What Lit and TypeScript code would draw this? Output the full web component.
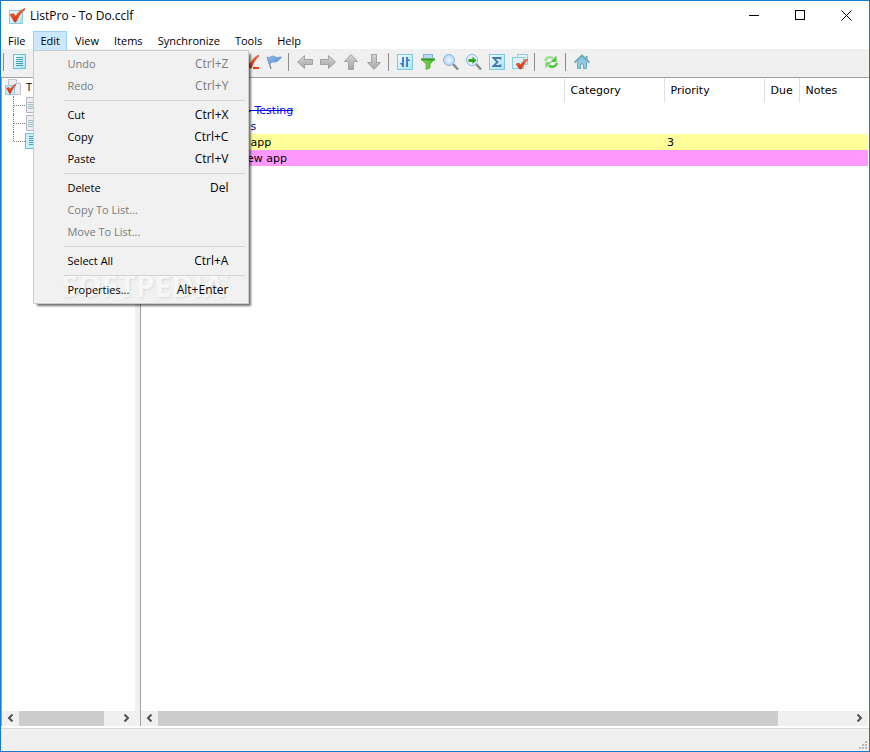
import { LitElement, html, css, svg, nothing } from "lit";
import { customElement, property } from "lit/decorators.js";

const page = (fill: string, line: string, ink: string) => svg`
  <path d="M1.500 .5h8l4 4v11h-12z" fill=${fill} stroke=${line}/>
  <path d="M9.500 .5v4h4" fill="#fff" stroke=${line}/>
  <path d="M3 5.500h6M3 7.500h9M3 9.500h9M3 11.500h9" stroke=${ink} fill="none"/>`;

const arrow = (d: string) => svg`<path d=${d} fill="url(#grey)" stroke="#a2a2a2"/>`;

const tile = svg`<rect x=".5" y=".5" width="15" height="15" fill="url(#ice)" stroke="#7cc8de"/>`;

const tick = (d: string) => svg`<path d=${d} fill="url(#red)" stroke="#c8320e" stroke-width=".5"/>`;

const icons: Record<string, unknown> = {
  app: svg`<rect x=".5" y="2.500" width="13" height="13" fill="url(#ice)" stroke="#8fcbe0"/>
    ${tick("M1 6.500L4.500 5.500L6.500 8.500C9 4.500 11.500 2 15.500 .5L16 1.500C12 4.500 9.500 8.500 7 14L5.500 14z")}`,
  root: svg`<path d="M3.500 .5h8l4 4v11h-12z" fill="#eeeef2" stroke="#c2c2cc"/><path d="M11.500 .5v4h4" fill="#fff" stroke="#c2c2cc"/>
    <rect x=".5" y="6.500" width="9" height="9" fill="#c9effa" stroke="#8fcbe0"/>
    ${tick("M1.500 9L4 8.500L5 10.500C6.500 8 8 6.500 10.500 5L11 6C8.500 8.500 7 11 5.500 14.500L4.500 14.500z")}`,
  doc: page("#eeeef0", "#b4b4be", "#9cbfc8"),
  docOn: svg`<rect x=".5" y=".5" width="14" height="15" fill="#c9f1fb" stroke="#6dbfd6"/>
    <path d="M4 3.500h8M4 5.500h8M4 7.500h8M4 9.500h8M4 11.500h8" stroke="#4a9db3"/>`,
  list: svg`<rect x="1.500" y=".5" width="12" height="14" fill="url(#ice)" stroke="#6dbfd6"/>
    <path d="M4 3.500h7M4 5.500h7M4 7.500h7M4 9.500h7M4 11.500h7" stroke="#4a9db3"/>`,
  check: svg`${tick("M1 8L5 7L7 10C9 6 11.500 3 15.500 1L16 2C12 6 10 9.500 8.500 14L6 14z")}
    <path d="M10 14h6" stroke="#ee3a17" stroke-width="2"/>`,
  flag: svg`<path d="M1.500 3L5 15" stroke="#8792a4" stroke-width="1.500"/>
    <path d="M1 3C3.500 5 5.500 .5 8.500 2.500S12.500 3 15.500 3C14.500 5 13 6 11 7.500C8.500 9 6 6.500 3.500 10.500z" fill="url(#blue)" stroke="#6f9ad2" stroke-width=".8"/>`,
  left: arrow("M.5 8L7.500 1.500V5.500H15.500V10.500H7.500V14.500z"),
  right: arrow("M15.500 8L8.500 1.500V5.500H.5V10.500H8.500V14.500z"),
  up: arrow("M8 .5L14.500 7.500H10.500V15.500H5.500V7.500H1.500z"),
  down: arrow("M8 15.500L14.500 8.500H10.500V.5H5.500V8.500H1.500z"),
  sort: svg`${tile}<path d="M6 3v10M10 13V3" stroke="#4a7ec8" stroke-width="2" fill="none"/>
    <path d="M2.500 9h4.500V13.500zM13.500 7H9V2.500z" fill="#4a7ec8"/>`,
  filter: svg`<path d="M1 5L6 10V15.500L10 14V10L15 5z" fill="url(#green)" stroke="#4fae35" stroke-width=".8"/>
    <rect x="3.500" y=".5" width="9" height="4" fill="#b9d9f4" stroke="#82b2e0"/><path d="M1 5.500h14" stroke="#3ba322" stroke-width="2"/>`,
  find: svg`<path d="M10 10L15 15.500" stroke="#858a92" stroke-width="2.500"/><circle cx="6" cy="6" r="5.500" fill="url(#lens)" stroke="#8fb2dc"/>`,
  findNext: svg`<path d="M10 10L15 15.500" stroke="#858a92" stroke-width="2.500"/><circle cx="6" cy="6" r="5.500" fill="#e4f1fd" stroke="#8fb2dc"/>
    <path d="M2.500 5h4V2.500L10.500 6.500L6.500 10V8H2.500z" fill="#2ea31b"/>`,
  sum: svg`${tile}<path d="M11.500 5.500V4H4.500L8.500 8L4.500 12H11.500V10.500" stroke="#4677be" stroke-width="1.800" fill="none"/>`,
  checks: svg`<path d="M5.500 .5h10v10h-10z" fill="#e2f7fd" stroke="#8fcde0"/><path d="M8 3.500h6M8 5.500h6" stroke="#a2cdd9"/>
    <rect x=".5" y="3.500" width="11" height="11" fill="#d5f4fc" stroke="#8fcde0"/>
    ${tick("M4 10L7 9L8.500 11C10.500 7.500 12 6.500 15 5L15.500 6C13 8.500 11 11.500 9.500 15L7.500 15z")}`,
  sync: svg`<path d="M2 7C3 3.500 7 2 10 4.500" fill="none" stroke="#a0de95" stroke-width="2.500"/>
    <path d="M13.500 1.500V8H7.500z" fill="#56c342"/>
    <path d="M14 9C13 12.500 9 14 6 11.500" fill="none" stroke="#4fc43a" stroke-width="2.500"/>
    <path d="M2.500 14.500V8H8.500z" fill="#7fd370"/>`,
  home: svg`<path d="M12.500 2v4" stroke="#6aaec5" stroke-width="2"/><path d="M3.500 8v6.500h3V10h3v4.500h3V8L8 3.500z" fill="#94cbdc" stroke="#66abc2"/>
    <path d="M.5 8.500L8 1.500L15.500 8.500" fill="none" stroke="#62a9c1" stroke-width="1.800"/>`,
};

const shades = svg`<defs>
  <linearGradient id="ice" x2="1" y2="1"><stop stop-color="#f4fdff"/><stop offset="1" stop-color="#a6e3f4"/></linearGradient>
  <linearGradient id="grey" x2="0" y2="1"><stop stop-color="#d4d4d4"/><stop offset="1" stop-color="#a6a6a6"/></linearGradient>
  <linearGradient id="red" x2="0" y2="1"><stop stop-color="#f9704a"/><stop offset="1" stop-color="#dd2c08"/></linearGradient>
  <linearGradient id="blue" x2="1" y2="1"><stop stop-color="#9cc0ee"/><stop offset="1" stop-color="#4f86cf"/></linearGradient>
  <linearGradient id="green" x2="1" y2="0"><stop stop-color="#8fe55c"/><stop offset="1" stop-color="#3fae26"/></linearGradient>
  <radialGradient id="lens"><stop stop-color="#eef7ff"/><stop offset="1" stop-color="#b2d5f6"/></radialGradient>
</defs>`;

@customElement("app-icon")
export class AppIcon extends LitElement {
  @property() name = "";
  static styles = css`
    :host { display: block; width: 16px; height: 16px; flex: none; }
    svg { display: block; }
  `;
  render() {
    return html`<svg width="16" height="16" viewBox="0 0 16 16" aria-hidden="true">${shades}${icons[this.name]}</svg>`;
  }
}

@customElement("scroll-bar")
export class ScrollBar extends LitElement {
  @property({ type: Number }) share = 50;
  static styles = css`
    :host { display: flex; height: 15px; background: #f0f0f0; }
    button { box-sizing: border-box; width: 17px; height: 15px; border: 0; background: none; display: flex; align-items: flex-start; padding: 3px 5px; }
    .track { flex: 1; }
    .thumb { height: 15px; background: #cdcdcd; }
    svg { display: block; flex: none; }
  `;
  render() {
    return html`
      <button aria-label="Scroll left"><svg width="7" height="8" viewBox="0 0 7 8"><path d="M5.500 .5L2 4L5.500 7.500" fill="none" stroke="#505050" stroke-width="2"/></svg></button>
      <div class="track"><div class="thumb" style="width:${this.share}%"></div></div>
      <button aria-label="Scroll right"><svg width="7" height="8" viewBox="0 0 7 8"><path d="M1.500 .5L5 4L1.500 7.500" fill="none" stroke="#505050" stroke-width="2"/></svg></button>`;
  }
}

type Entry = { label: string; keys?: string; off?: boolean };

const editMenu: Entry[][] = [
  [{ label: "Undo", keys: "Ctrl+Z", off: true }, { label: "Redo", keys: "Ctrl+Y", off: true }],
  [{ label: "Cut", keys: "Ctrl+X" }, { label: "Copy", keys: "Ctrl+C" }, { label: "Paste", keys: "Ctrl+V" }],
  [{ label: "Delete", keys: "Del" }, { label: "Copy To List...", off: true }, { label: "Move To List...", off: true }],
  [{ label: "Select All", keys: "Ctrl+A" }],
  [{ label: "Properties...", keys: "Alt+Enter" }],
];

const menus = ["File", "Edit", "View", "Items", "Synchronize", "Tools", "Help"];

const toolGroups: [string, string][][] = [
  [["check", "Check"], ["flag", "Flag"]],
  [["left", "Move left"], ["right", "Move right"], ["up", "Move up"], ["down", "Move down"]],
  [["sort", "Sort"], ["filter", "Filter"], ["find", "Find"], ["findNext", "Find next"], ["sum", "Totals"], ["checks", "Check all"]],
  [["sync", "Synchronize"]],
  [["home", "Home"]],
];

const rows = [
  { title: "- Testing", priority: "", tone: "done" },
  { title: "\u00a0s", priority: "", tone: "navy" },
  { title: "\u00a0app", priority: "3", tone: "yellow" },
  { title: "ew app", priority: "", tone: "pink" },
];

@customElement("app-root")
export class AppRoot extends LitElement {
  static styles = css`
    :host { display: block; font: 11px/16px "Open Sans", "Noto Sans", sans-serif; color: #000; }
    * { box-sizing: border-box; }
    button { font: inherit; color: inherit; border: 0; background: none; padding: 0; margin: 0; }
    svg { display: block; }
    .window { display: flex; flex-direction: column; min-height: 100vh; border: 1px solid #1979ca; background: #fff; }
    .title { display: flex; align-items: center; height: 30px; padding-left: 8px; }
    .title h1 { flex: 1; margin: 0 0 0 5px; font-size: 12px; font-weight: 400; }
    .title button { width: 46px; height: 30px; padding-bottom: 2px; display: grid; place-items: center; }
    .menubar { display: flex; gap: 1px; height: 18px; }
    .holder { position: relative; }
    .top { display: block; height: 20px; padding: 0 6px; border: 1px solid transparent; line-height: 18px; }
    .top.open { background: #cce8ff; border-color: #99d1ff; }
    .menu { position: absolute; top: 19px; left: 0; z-index: 2; width: 216px; padding: 2px; background: #f1f1f1; border: 1px solid #cccccc; box-shadow: 3px 3px 2px -1px rgba(0, 0, 0, .55); isolation: isolate; }
    .sep { height: 1px; margin: 3px 1px 3px 28px; background: #d5d5d5; }
    .item { display: flex; justify-content: space-between; width: 100%; height: 22px; padding: 0 18px 0 31px; line-height: 22px; text-align: left; }
    .item:disabled { color: #7b7b7b; }
    .keys { font-size: 12px; }
    .mark { position: absolute; z-index: -1; left: 27px; bottom: 1px; display: flex; font: 700 30px/32px "Open Sans", sans-serif; color: #f7f7f7; text-shadow: 1px 1px 2px #dadada; white-space: nowrap; }
    .mark sup { font-size: 12px; line-height: 16px; }
    .tools { display: flex; align-items: center; height: 28px; padding-bottom: 2px; background: #f0f0f0; }
    .tool { display: flex; align-items: center; padding-left: 3px; width: 23px; height: 22px; }
    .bar { flex: none; width: 8px; height: 18px; background: linear-gradient(#8c8c8c, #8c8c8c) 2px 0 / 1px 100% no-repeat; }
    .gap { flex: none; width: 208px; }
    .body { flex: 1; display: grid; grid-template-columns: 133px 6px minmax(0, 1fr); border-top: 1px solid #a0a0a0; border-left: 1px solid #a0a0a0; padding-right: 1px; }
    .pane { display: flex; flex-direction: column; min-width: 0; }
    .split { background: #f0f0f0; border-right: 1px solid #a0a0a0; }
    .fill { flex: 1; }
    ul { list-style: none; margin: 0; padding: 0; }
    .root { display: flex; gap: 5px; height: 18px; padding: 0 3px; align-items: center; }
    .kids { margin-left: 11px; }
    .kids li { display: flex; height: 18px; border-left: 1px dotted #808080; align-items: center; }
    .kids li::before { content: ""; width: 11px; height: 1px; background: repeating-linear-gradient(90deg, #808080 0 1px, transparent 1px 2px); }
    .kids li:last-child { border-left: 0; padding-left: 1px; background: repeating-linear-gradient(#808080 0 1px, transparent 1px 2px) 0 0 / 1px 10px no-repeat; }
    table { width: 100%; table-layout: fixed; border-collapse: collapse; font: 11px/14px "DejaVu Sans", sans-serif; }
    th { height: 24px; padding: 2px 0 0 6px; text-align: left; font-weight: 400; border-right: 1px solid #e0e0e0; }
    th:last-child { border-right: 0; }
    td { height: 16px; padding: 2px 0 0 3px; line-height: 14px; white-space: nowrap; }
    td:first-child { padding-left: 106px; }
    .c-title { width: 423px; }
    .c-wide { width: 100px; }
    .c-due { width: 35px; }
    .done { color: #0000ff; }
    .done td { text-decoration: line-through; }
    .navy { color: #000080; }
    .yellow { background: #ffff99; }
    .pink { background: #ff99ff; }
    .status { display: flex; justify-content: flex-end; align-items: flex-end; height: 23px; margin-top: 2px; padding: 0 2px 2px; border-top: 1px solid #d7d7d7; background: #f0f0f0; }
  `;

  private menu() {
    return html`<div class="menu" role="menu">
      ${editMenu.map((group, i) => html`
        ${i ? html`<div class="sep" role="separator"></div>` : nothing}
        ${group.map((e) => html`<button class="item" role="menuitem" ?disabled=${e.off}><span>${e.label}</span><span class="keys">${e.keys}</span></button>`)}`)}
      <div class="mark">SOFTPEDIA<sup>°</sup></div>
    </div>`;
  }

  private tool([icon, label]: [string, string]) {
    return html`<button class="tool" aria-label=${label}><app-icon name=${icon}></app-icon></button>`;
  }

  render() {
    return html`<div class="window">
      <header class="title">
        <app-icon name="app"></app-icon>
        <h1>ListPro - To Do.cclf</h1>
        <button aria-label="Minimize"><svg width="10" height="10"><path d="M0 5.500h10" stroke="#000"/></svg></button>
        <button aria-label="Maximize"><svg width="10" height="10"><rect x=".5" y=".5" width="9" height="9" fill="none" stroke="#000"/></svg></button>
        <button aria-label="Close"><svg width="11" height="11"><path d="M.5 .5l10 10M10.500 .5l-10 10" stroke="#000"/></svg></button>
      </header>
      <nav class="menubar">
        ${menus.map((m) => html`<div class="holder"><button class="top ${m === "Edit" ? "open" : ""}">${m}</button>${m === "Edit" ? this.menu() : nothing}</div>`)}
      </nav>
      <div class="tools" role="toolbar">
        <span class="bar"></span>
        ${this.tool(["list", "New list"])}
        <span class="gap"></span>
        ${toolGroups.map((g, i) => html`${i ? html`<span class="bar"></span>` : nothing}${g.map((t) => this.tool(t))}`)}
      </div>
      <main class="body">
        <section class="pane">
          <div class="root"><app-icon name="root"></app-icon><span>T</span></div>
          <ul class="kids">
            <li><app-icon name="doc"></app-icon></li>
            <li><app-icon name="doc"></app-icon></li>
            <li><app-icon name="docOn"></app-icon></li>
          </ul>
          <div class="fill"></div>
          <scroll-bar share="86"></scroll-bar>
        </section>
        <div class="split"></div>
        <section class="pane">
          <table>
            <colgroup><col class="c-title"><col class="c-wide"><col class="c-wide"><col class="c-due"><col></colgroup>
            <thead><tr><th></th><th>Category</th><th>Priority</th><th>Due</th><th>Notes</th></tr></thead>
            <tbody>
              ${rows.map((r) => html`<tr class=${r.tone}><td>${r.title}</td><td></td><td>${r.priority}</td><td></td><td></td></tr>`)}
            </tbody>
          </table>
          <div class="fill"></div>
          <scroll-bar share="89.5"></scroll-bar>
        </section>
      </main>
      <footer class="status">
        <svg width="8" height="8" viewBox="0 0 8 8" fill="#b8b8b8"><path d="M6 0h2v2h-2zM3 3h2v2h-2zM6 3h2v2h-2zM0 6h2v2h-2zM3 6h2v2h-2zM6 6h2v2h-2z"/></svg>
      </footer>
    </div>`;
  }
}
